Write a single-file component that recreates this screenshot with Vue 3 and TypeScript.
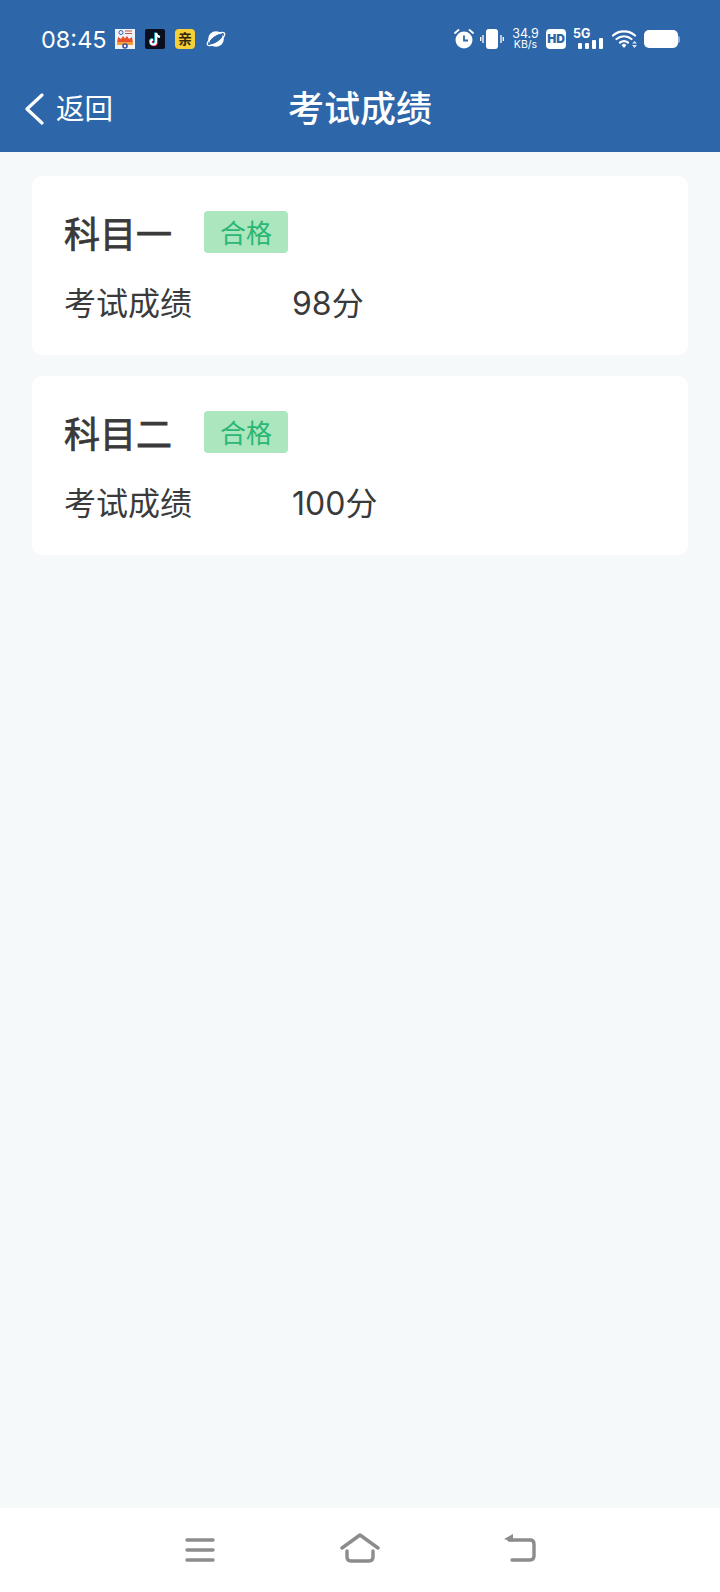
<script setup lang="ts">
interface Exam { name: string; score: string }
const exams: Exam[] = [
  { name: '科目一', score: '98分' },
  { name: '科目二', score: '100分' },
]
const bars: number[] = [6, 6, 9, 11]
</script>

<template>
  <div class="page">
    <header class="top">
      <div class="status">
        <span class="time">08:45</span>
        <div class="apps">
          <svg class="app" viewBox="0 0 20 20">
            <rect width="20" height="20" fill="#eef1f8" />
            <circle cx="6" cy="3.500" r="2" fill="none" stroke="#3a62b0" stroke-width="1" />
            <path d="M10 2 H17 M10 4.500 H17" stroke="#c8553a" stroke-width="1.200" />
            <path d="M2 14 L3 8 L6 10 L8 7 L10 9.500 L12 7 L14 10 L17 8 L18 14 Z" fill="#e8502c" />
            <rect x="2" y="13" width="16" height="3" fill="#f0a03a" />
            <circle cx="10" cy="17" r="2.800" fill="#3a4fa0" />
            <circle cx="10" cy="17" r="1.200" fill="#fff" />
          </svg>
          <svg class="app" viewBox="0 0 20 20">
            <rect width="20" height="20" rx="2" fill="#0a0f20" />
            <path d="M11 4 V13 A2.600 2.600 0 1 1 8 10.400" fill="none" stroke="#ff2d55" stroke-width="2.200" transform="translate(.7 .5)" />
            <path d="M11 4 V13 A2.600 2.600 0 1 1 8 10.400 M11 4 C11.500 6.500 13 7.600 15 8" fill="none" stroke="#25e0e6" stroke-width="2.200" transform="translate(-.6 -.4)" />
            <path d="M11 4 V13 A2.600 2.600 0 1 1 8 10.400 M11 4 C11.500 6.500 13 7.600 15 8" fill="none" stroke="#fff" stroke-width="2" />
          </svg>
          <div class="app yellow">亲</div>
          <svg class="app planet" viewBox="0 0 22 18">
            <circle cx="11" cy="9" r="7.800" fill="#fff" />
            <ellipse cx="11" cy="9" rx="7.800" ry="3.300" fill="#2d66a9" transform="rotate(-35 11 9)" />
            <ellipse cx="11" cy="9" rx="10.300" ry="3.800" fill="none" stroke="#fff" stroke-width="1.300" transform="rotate(-35 11 9)" />
          </svg>
        </div>
        <div class="indicators">
          <svg class="alarm" viewBox="0 0 20 20">
            <path d="M1 4 L4.500 1 M19 4 L15.500 1" stroke="#fff" stroke-width="1.800" stroke-linecap="round" />
            <circle cx="10" cy="11" r="8.500" fill="#fff" />
            <path d="M10 6.500 V11.500 H14" fill="none" stroke="#2d66a9" stroke-width="1.800" />
          </svg>
          <svg class="vibrate" viewBox="0 0 24 20">
            <rect x="6" y="0" width="12" height="20" rx="3" fill="#fff" />
            <path d="M3 6 V14 M.7 8 V12 M21 6 V14 M23.300 8 V12" stroke="#fff" stroke-width="1.300" />
          </svg>
          <div class="speed"><span>34.9</span><span class="unit">KB/s</span></div>
          <div class="hd">HD</div>
          <div class="signal">
            <span class="five">5G</span>
            <div class="bars">
              <i v-for="(h, n) in bars" :key="n" :style="{ height: h + 'px' }"></i>
            </div>
          </div>
          <svg class="wifi" viewBox="0 0 26 20">
            <path d="M1 6.500 C7 1 17 1 23 6.500 M4.500 10 C9 6.300 15 6.300 19.500 10 M8 13.500 C10.500 11.700 13.500 11.700 16 13.500" fill="none" stroke="#fff" stroke-width="2.200" stroke-linecap="round" />
            <path d="M9.500 16 L12 14.500 L14.500 16 L12 19 Z" fill="#fff" />
            <path d="M22.500 12 L25 14.500 H20 Z M20 16 H25 L22.500 19 Z" fill="#dbe6f3" />
          </svg>
          <div class="battery"><i></i></div>
        </div>
      </div>
      <div class="nav">
        <div class="back">
          <svg class="chev" viewBox="0 0 20 32">
            <path d="M18 2 L3 16 L18 30" fill="none" stroke="#fff" stroke-width="3.200" stroke-linecap="round" stroke-linejoin="round" />
          </svg>
          <span>返回</span>
        </div>
        <h1>考试成绩</h1>
      </div>
    </header>

    <main class="content">
      <section v-for="e in exams" :key="e.name" class="card">
        <div class="head">
          <h2>{{ e.name }}</h2>
          <span class="badge">合格</span>
        </div>
        <div class="row">
          <span class="label">考试成绩</span>
          <span class="value">{{ e.score }}</span>
        </div>
      </section>
    </main>

    <footer class="bottom">
      <svg class="menu" viewBox="0 0 32 26">
        <path d="M3 3 H29 M3 13 H29 M3 23 H29" stroke="#8c8c8c" stroke-width="3.400" stroke-linecap="round" />
      </svg>
      <svg class="home" viewBox="0 0 40 30">
        <path d="M2 15 L20 2 L38 15" fill="none" stroke="#8c8c8c" stroke-width="3.400" stroke-linecap="round" stroke-linejoin="round" />
        <path d="M7 18 V24 Q7 28 11 28 H29 Q33 28 33 24 V18" fill="none" stroke="#8c8c8c" stroke-width="3.400" stroke-linecap="round" />
      </svg>
      <svg class="ret" viewBox="0 0 34 30">
        <path d="M6 8 H27 Q31 8 31 12 V24 Q31 28 27 28 H9" fill="none" stroke="#8c8c8c" stroke-width="3.400" stroke-linecap="round" />
        <path d="M1 7 L10 2 V10 Z" fill="#8c8c8c" />
      </svg>
    </footer>
  </div>
</template>

<style>
html, body { margin: 0; padding: 0; }
</style>

<style scoped>
.page {
  width: 720px;
  height: 1592px;
  display: flex;
  flex-direction: column;
  background: #f5f9fa;
  font-family: "Inter", "Noto Sans CJK SC", sans-serif;
  overflow: hidden;
}
.top {
  height: 152px;
  background: #2d66a9;
  color: #fff;
  flex: none;
}
.status {
  height: 78px;
  padding: 0 40px 0 41px;
  display: flex;
  align-items: center;
  box-sizing: border-box;
}
.time {
  font-size: 23.500px;
  padding-top: 1px;
  width: 74px;
  flex: none;
}
.apps {
  display: flex;
  align-items: center;
  gap: 10px;
}
.app {
  width: 20px;
  height: 20px;
  display: block;
}
.planet { width: 22px; height: 18px; }
.yellow {
  background: #f7d038;
  border-radius: 4px;
  color: #33290a;
  font-size: 14px;
  font-weight: 700;
  line-height: 20px;
  text-align: center;
}
.indicators {
  margin-left: auto;
  display: flex;
  align-items: center;
}
.alarm { width: 20px; height: 20px; margin-right: 6px; }
.vibrate { width: 24px; height: 20px; margin-right: 8px; }
.speed {
  display: flex;
  flex-direction: column;
  align-items: center;
  font-size: 12.500px;
  line-height: 12px;
  width: 27px;
  margin-right: 7px;
}
.unit { font-size: 10.500px; line-height: 10px; }
.hd {
  width: 20px;
  height: 20px;
  background: #fff;
  border-radius: 4px;
  color: #2d66a9;
  font-size: 12px;
  font-weight: 900;
  line-height: 20px;
  text-align: center;
  margin-right: 7px;
}
.signal {
  position: relative;
  width: 30px;
  height: 20px;
  margin-right: 9px;
}
.five {
  position: absolute;
  left: 0;
  top: -2px;
  font-size: 12.500px;
  font-weight: 700;
  line-height: 14px;
}
.bars {
  position: absolute;
  right: 0;
  bottom: 0;
  display: flex;
  align-items: flex-end;
  gap: 3px;
}
.bars i {
  display: block;
  width: 4px;
  border-radius: 1px;
  background: #fff;
}
.wifi { width: 26px; height: 20px; margin-right: 6px; }
.battery {
  width: 34px;
  height: 18px;
  margin-right: 2px;
  display: flex;
  align-items: center;
  position: relative;
  background: #fff;
  border-radius: 5px;
}
.battery i {
  position: absolute;
  right: -2px;
  width: 2px;
  height: 7px;
  background: #8fb0d5;
  border-radius: 0 2px 2px 0;
}
.nav {
  position: relative;
  height: 62px;
  display: flex;
  align-items: center;
  justify-content: center;
}
.back {
  position: absolute;
  left: 24px;
  top: 0;
  bottom: 0;
  display: flex;
  align-items: center;
  gap: 12px;
  font-size: 28.500px;
  line-height: 34px;
}
.chev { width: 20px; height: 32px; display: block; }
h1 {
  margin: 0;
  font-size: 36px;
  font-weight: 500;
  line-height: 44px;
}
.content {
  flex: 1;
  padding: 24px 32px 0;
  display: flex;
  flex-direction: column;
  gap: 21px;
}
.card {
  height: 179px;
  box-sizing: border-box;
  background: #fff;
  border-radius: 10px;
  padding: 35px 32px 0;
}
.head {
  display: flex;
  align-items: center;
  gap: 32px;
  height: 42px;
}
h2 {
  margin: 0;
  padding-top: 5px;
  font-size: 36px;
  font-weight: 400;
  -webkit-text-stroke: 0.8px #3a3a3a;
  line-height: 42px;
  color: #3a3a3a;
}
.badge {
  width: 84px;
  height: 42px;
  background: #abe6bf;
  border-radius: 4px;
  color: #2bb673;
  font-size: 26px;
  line-height: 45px;
  text-align: center;
}
.row {
  margin-top: 31px;
  display: flex;
  align-items: center;
  font-size: 32px;
  line-height: 40px;
  color: #3a3a3a;
}
.label { width: 228px; flex: none; }
.bottom {
  height: 84px;
  flex: none;
  background: #fff;
  position: relative;
}
.menu { position: absolute; left: 184px; top: 29px; width: 32px; height: 26px; }
.home { position: absolute; left: 340px; top: 25px; width: 40px; height: 30px; }
.ret { position: absolute; left: 503px; top: 24px; width: 34px; height: 30px; }
</style>
